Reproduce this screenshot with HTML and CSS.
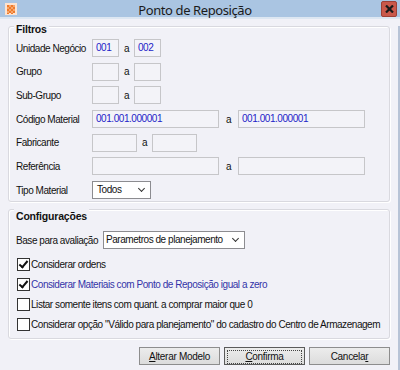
FILE: index.html
```html
<!DOCTYPE html>
<html>
<head>
  <meta charset="UTF-8">
  <title>Ponto de Reposição</title>
  <link rel="stylesheet" href="styles.css">
</head>
<body>
  <div class="window">
    <div class="titlebar">
      <span class="app-icon">
        <svg width="12" height="12" viewBox="0 0 12 12">
          <rect width="12" height="12" fill="#fde3cf"/>
          <path d="M2 2h2v2H2zM6 2h2v2H6zM4 4h2v2H4zM8 4h2v2H8zM2 6h2v2H2zM6 6h2v2H6zM4 8h2v2H4zM8 8h2v2H8zM2 10h2v1H2zM6 10h2v1H6z" fill="#f07a2a"/>
          <path d="M4 2h2v2H4zM8 2h2v2H8zM2 4h2v2H2zM6 4h2v2H6zM4 6h2v2H4zM8 6h2v2H8zM2 8h2v2H2zM6 8h2v2H6z" fill="#f6a66a"/>
        </svg>
      </span>
      <span class="title">Ponto de Reposição</span>
      <span class="close-btn">
        <svg width="9" height="8" viewBox="0 0 9 8">
          <path d="M1 0.5 L8 7.5 M8 0.5 L1 7.5" stroke="#1a1a1a" stroke-width="2.2"/>
        </svg>
      </span>
    </div>

    <div class="client">
      <div class="group filtros">
        <div class="group-title">Filtros</div>
        <div class="rows">
          <div class="row">
            <span class="lbl">Unidade Negócio</span>
            <span class="field w-xs value">001</span>
            <span class="sep">a</span>
            <span class="field w-xs value">002</span>
          </div>
          <div class="row">
            <span class="lbl">Grupo</span>
            <span class="field w-xs"></span>
            <span class="sep">a</span>
            <span class="field w-xs"></span>
          </div>
          <div class="row">
            <span class="lbl">Sub-Grupo</span>
            <span class="field w-xs"></span>
            <span class="sep">a</span>
            <span class="field w-xs"></span>
          </div>
          <div class="row">
            <span class="lbl">Código Material</span>
            <span class="field w-lg value">001.001.000001</span>
            <span class="sep sep-lg">a</span>
            <span class="field w-lg value">001.001.000001</span>
          </div>
          <div class="row">
            <span class="lbl">Fabricante</span>
            <span class="field w-md"></span>
            <span class="sep">a</span>
            <span class="field w-md"></span>
          </div>
          <div class="row">
            <span class="lbl">Referência</span>
            <span class="field w-lg"></span>
            <span class="sep sep-lg">a</span>
            <span class="field w-lg"></span>
          </div>
          <div class="row">
            <span class="lbl">Tipo Material</span>
            <span class="combo combo-tipo">Todos<span class="chev"></span></span>
          </div>
        </div>
      </div>

      <div class="group config">
        <div class="group-title">Configurações</div>
        <div class="base-row">
          <span class="base-lbl">Base para avaliação</span>
          <span class="combo combo-base">Parametros de planejamento<span class="chev"></span></span>
        </div>
        <div class="checks">
          <div class="check-row">
            <span class="box checked"></span>
            <span>Considerar ordens</span>
          </div>
          <div class="check-row blue">
            <span class="box checked"></span>
            <span>Considerar Materiais com Ponto de Reposição igual a zero</span>
          </div>
          <div class="check-row">
            <span class="box"></span>
            <span>Listar somente itens com quant. a comprar maior que 0</span>
          </div>
          <div class="check-row">
            <span class="box"></span>
            <span>Considerar opção "Válido para planejamento" do cadastro do Centro de Armazenagem</span>
          </div>
        </div>
      </div>

      <div class="buttons">
        <button class="btn"><u>A</u>lterar Modelo</button>
        <button class="btn focused"><span class="focus-rect"><u>C</u>onfirma</span></button>
        <button class="btn">Cancela<u>r</u></button>
      </div>
    </div>
  </div>
</body>
</html>
```

FILE: styles.css
```css
body {
  margin: 0;
  padding: 0;
  font-family: "Liberation Sans", Arial, sans-serif;
  font-size: 10px;
  letter-spacing: -0.45px;
  color: #111;
  background-color: #f1f1f7;
  white-space: nowrap;
}
.window {
  width: 400px;
  height: 370px;
  overflow: hidden;
  background-color: #f1f1f7;
}
.titlebar {
  height: 17px;
  display: flex;
  align-items: center;
  background-color: #aac5e2;
  border-bottom: 2px solid #dde7f2;
}
.app-icon {
  width: 12px;
  height: 12px;
  margin-left: 5px;
  display: flex;
}
.title {
  flex: 1;
  text-align: center;
  font-family: "Noto Sans", "Open Sans", sans-serif;
  font-size: 13px;
  letter-spacing: -0.4px;
  color: #1b1b1b;
  margin-left: -8px;
  padding-top: 2px;
}
.close-btn {
  width: 14px;
  height: 14px;
  margin-right: 3px;
  margin-top: 1px;
  background-color: #c9584a;
  border: 1px solid #9e4036;
  border-radius: 2px;
  display: flex;
  align-items: center;
  justify-content: center;
}
.client {
  padding: 0 8px;
  border-right: 2px solid #b7c3d6;
  height: 351px;
}

/* group boxes */
.group {
  border: 1px solid #d9d9df;
  border-radius: 3px;
  box-shadow: inset 1px 1px 0 #fff, 1px 1px 0 #fff;
  padding: 0 7px;
  margin-top: 7px;
}
.group-title {
  width: fit-content;
  margin: -4px 0 0 -2px;
  padding: 0 2px;
  background-color: #f1f1f7;
  font-weight: bold;
  font-size: 10.5px;
  line-height: 13px;
  letter-spacing: -0.2px;
}
.filtros {
  padding-bottom: 2px;
}
.rows {
  margin-top: 3px;
  display: flex;
  flex-direction: column;
  gap: 5.7px;
}
.row {
  height: 18px;
  display: flex;
  align-items: center;
}
.lbl {
  width: 76px;
}
.field {
  height: 16px;
  border: 1px solid #c6c6c9;
  background-color: #f3f3f8;
  line-height: 16px;
  padding-left: 3px;
}
.value {
  color: #2323c8;
}
.w-xs { width: 22px; }
.w-md { width: 40px; }
.w-lg { width: 122px; }
.sep {
  width: 15px;
  text-align: center;
}
.sep-lg {
  width: 19px;
}
.combo {
  height: 16px;
  border: 1px solid #8c8c90;
  background-color: #fff;
  line-height: 16px;
  padding-left: 4px;
  display: flex;
  align-items: center;
  position: relative;
}
.combo-tipo {
  width: 53px;
}
.combo-base {
  width: 138px;
  padding-left: 2px;
}
.chev {
  position: absolute;
  right: 6px;
  top: 4px;
  width: 4px;
  height: 4px;
  border-right: 1px solid #333;
  border-bottom: 1px solid #333;
  transform: rotate(45deg);
}

/* configuracoes */
.config {
  padding-bottom: 7px;
}
.config .group-title {
  margin-top: -2px;
  line-height: 17px;
}
.base-row {
  margin-top: 6px;
  display: flex;
  align-items: center;
  height: 18px;
}
.base-lbl {
  width: 87px;
}
.checks {
  margin-top: 9px;
  display: flex;
  flex-direction: column;
  gap: 7px;
}
.check-row {
  height: 13px;
  display: flex;
  align-items: center;
  margin-left: 1px;
}
.check-row.blue {
  color: #3434a8;
}
.box {
  flex-shrink: 0;
  width: 11px;
  height: 11px;
  border: 1px solid #333;
  background-color: #fff;
  margin-right: 1px;
  position: relative;
}
.box.checked::after {
  content: "";
  position: absolute;
  left: 3px;
  top: 0px;
  width: 3px;
  height: 7px;
  border-right: 2px solid #111;
  border-bottom: 2px solid #111;
  transform: rotate(40deg);
}

/* buttons */
.buttons {
  margin-top: 8px;
  display: flex;
  justify-content: flex-end;
  gap: 4px;
}
.btn {
  width: 81px;
  height: 18px;
  padding: 0;
  font-family: "Liberation Sans", Arial, sans-serif;
  font-size: 10px;
  letter-spacing: -0.3px;
  color: #111;
  background: linear-gradient(#ececec, #dcdcdc);
  border: 1px solid #8d8d8d;
  border-radius: 0;
}
.btn.focused {
  border-color: #5a5a5a;
  padding: 2px;
}
.focus-rect {
  display: block;
  height: 12px;
  line-height: 12px;
  border: 1px dotted #444;
}
```
